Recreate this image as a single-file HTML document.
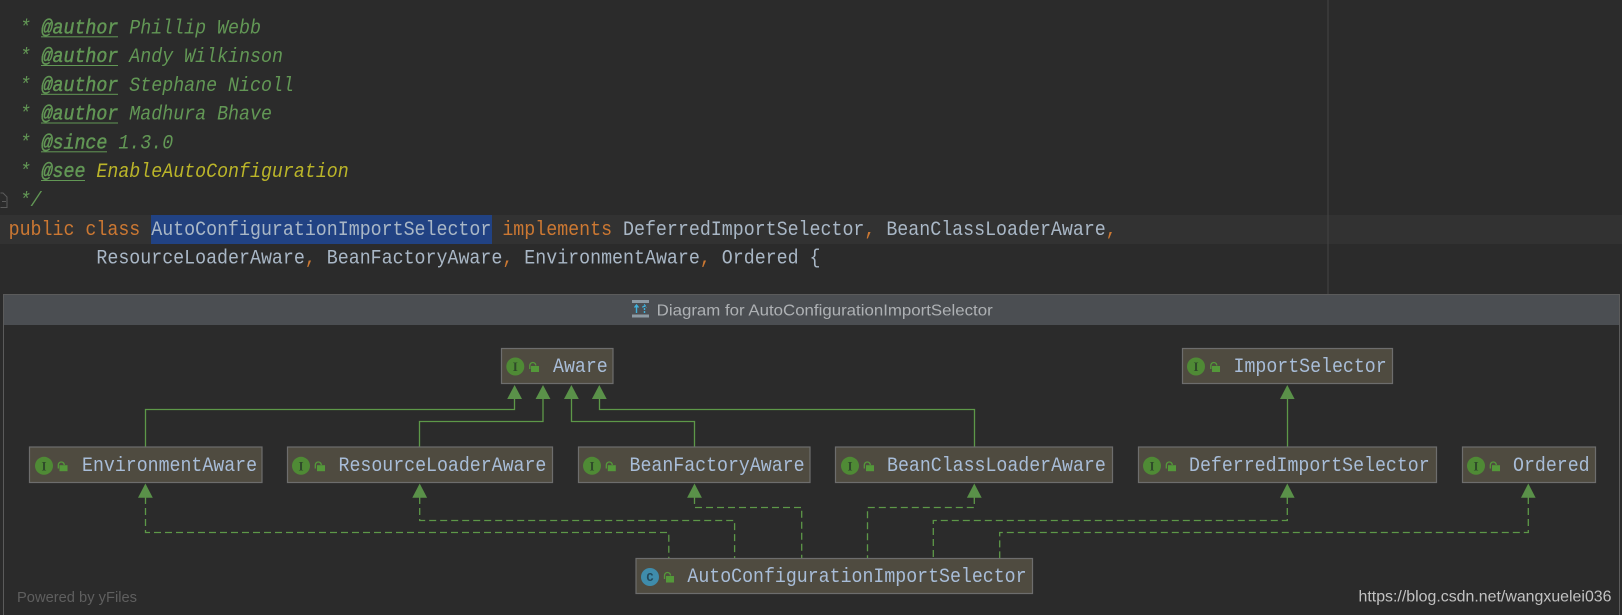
<!DOCTYPE html>
<html><head><meta charset="utf-8"><style>
html,body{margin:0;padding:0;background:#2b2b2b;width:1622px;height:615px;overflow:hidden}
svg{display:block}
.m{font-family:"Liberation Mono",monospace;font-size:20px}
.c{font-style:italic;fill:#629755}
.b{stroke:#629755;stroke-width:.45}
.t{fill:#a9b7c6}
.k{fill:#cc7832}
.n{font-family:"Liberation Mono",monospace;font-size:20px;fill:#a8bdd8}
.s{font-family:"Liberation Sans",sans-serif}
.box{fill:#4f4b40;stroke:#6d6d6d;stroke-width:1.2}
.e{fill:none;stroke:#5d9848;stroke-width:1.3}
.d{fill:none;stroke:#5d9848;stroke-width:1.3;stroke-dasharray:7 4}
.a{fill:#5a9149}
.ic{fill:#4f8a35}
.lk{fill:#54983a}
.sh{fill:none;stroke:#54983a;stroke-width:1.3}
.I{font-family:"Liberation Serif",serif;font-size:13px;font-weight:bold;fill:#2f4a2a;text-anchor:middle}
</style></head><body>
<svg width="1622" height="615" viewBox="0 0 1622 615" xmlns="http://www.w3.org/2000/svg">
<rect width="1622" height="615" fill="#2b2b2b"/>
<rect x="0" y="215" width="1622" height="29" fill="#323232"/>
<rect x="151" y="215" width="341" height="29" fill="#214283"/>
<rect x="1327.5" y="0" width="1" height="294" fill="#444"/>

<g class="m" xml:space="preserve">
<text class="c" transform="translate(8.6 33.5) scale(.9145 1)" xml:space="preserve"> * <tspan class="b">@author</tspan> Phillip Webb</text>
<text class="c" transform="translate(8.6 62.2) scale(.9145 1)" xml:space="preserve"> * <tspan class="b">@author</tspan> Andy Wilkinson</text>
<text class="c" transform="translate(8.6 91) scale(.9145 1)" xml:space="preserve"> * <tspan class="b">@author</tspan> Stephane Nicoll</text>
<text class="c" transform="translate(8.6 119.7) scale(.9145 1)" xml:space="preserve"> * <tspan class="b">@author</tspan> Madhura Bhave</text>
<text class="c" transform="translate(8.6 148.5) scale(.9145 1)" xml:space="preserve"> * <tspan class="b">@since</tspan> 1.3.0</text>
<text class="c" transform="translate(8.6 177.2) scale(.9145 1)" xml:space="preserve"> * <tspan class="b">@see</tspan> <tspan fill="#bbb529">EnableAutoConfiguration</tspan></text>
<text class="c" transform="translate(8.6 206) scale(.9145 1)" xml:space="preserve"> */</text>
<text transform="translate(8.6 235) scale(.9145 1)" xml:space="preserve" class="t"><tspan class="k">public class </tspan>AutoConfigurationImportSelector <tspan class="k">implements </tspan>DeferredImportSelector<tspan class="k">, </tspan>BeanClassLoaderAware<tspan class="k">,</tspan></text>
<text transform="translate(8.6 263.7) scale(.9145 1)" xml:space="preserve" class="t">        ResourceLoaderAware<tspan class="k">, </tspan>BeanFactoryAware<tspan class="k">, </tspan>EnvironmentAware<tspan class="k">, </tspan>Ordered {</text>
</g>
<g fill="#629755">
<rect x="41" y="36.3" width="77" height="1"/>
<rect x="41" y="65" width="77" height="1"/>
<rect x="41" y="93.8" width="77" height="1"/>
<rect x="41" y="122.5" width="77" height="1"/>
<rect x="41" y="151.3" width="66" height="1"/>
<rect x="41" y="180" width="44" height="1"/>
</g>
<path d="M0.5 193 H3 L7 197 V207.5 H0.5 M2 201.5 H6" fill="none" stroke="#5b5b5b" stroke-width="1"/>

<!-- panel -->
<rect x="3.5" y="294.5" width="1616" height="330" fill="#2b2b2b" stroke="#5b5b5b" stroke-width="1"/>
<rect x="4" y="295" width="1615" height="30" fill="#4b4e52"/>
<g>
<rect x="632" y="300" width="17" height="3" fill="#8d9aa3"/>
<rect x="632" y="314.5" width="17" height="3" fill="#8d9aa3"/>
<path d="M636.5 313 V306 M634.5 307.5 L636.5 305 L638.5 307.5" fill="none" stroke="#3fb1dc" stroke-width="1.4"/>
<path d="M644.5 313 V306 M642.5 307.5 L644.5 305 L646.5 307.5" fill="none" stroke="#3fb1dc" stroke-width="1.4" stroke-dasharray="2 1"/>
</g>
<text class="s" x="656.7" y="315.5" font-size="16" fill="#aeb1b4" textLength="336" lengthAdjust="spacingAndGlyphs">Diagram for AutoConfigurationImportSelector</text>

<!-- solid edges -->
<path class="e" d="M145.5 447 V409.5 H514.5 V398"/>
<path class="e" d="M419.5 447 V421.5 H543 V398"/>
<path class="e" d="M694.5 447 V421.5 H571.5 V398"/>
<path class="e" d="M974.5 447 V409.5 H599.5 V398"/>
<path class="e" d="M1287.5 447 V398"/>
<!-- dashed edges -->
<path class="d" d="M145.5 497 V532.5 H668.8 V558"/>
<path class="d" d="M419.7 497 V520.5 H734.6 V558"/>
<path class="d" d="M694.5 497 V507.5 H801.7 V558"/>
<path class="d" d="M974.3 497 V507.5 H867.5 V558"/>
<path class="d" d="M1287.3 497 V520.5 H933.3 V558"/>
<path class="d" d="M1528.3 497 V532.5 H999.7 V558"/>
<!-- arrows -->
<g class="a">
<polygon points="514.6,385 507.2,399 522,399"/>
<polygon points="543,385 535.6,399 550.4,399"/>
<polygon points="571.4,385 564,399 578.8,399"/>
<polygon points="599.3,385 591.9,399 606.7,399"/>
<polygon points="1287.3,385 1280,399 1294.6,399"/>
<polygon points="145.4,483.5 138,497.8 152.8,497.8"/>
<polygon points="419.7,483.5 412.3,497.8 427.1,497.8"/>
<polygon points="694.5,483.5 687.1,497.8 701.9,497.8"/>
<polygon points="974.3,483.5 966.9,497.8 981.7,497.8"/>
<polygon points="1287.3,483.5 1280,497.8 1294.6,497.8"/>
<polygon points="1528.3,483.5 1521,497.8 1535.6,497.8"/>
</g>

<!-- nodes -->
<g>
<rect class="box" x="501.5" y="348.5" width="111.5" height="35"/>
<circle class="ic" cx="515.3" cy="366.5" r="9"/><text class="I" x="515.3" y="371">I</text>
<path class="sh" d="M529.8 369 V365.5 a3 3 0 0 1 6 0"/><rect class="lk" x="531" y="366" width="8" height="6"/>
<text class="n" transform="translate(553 372) scale(.9125 1)">Aware</text>
</g>
<g>
<rect class="box" x="1182.5" y="348.5" width="210" height="35"/>
<circle class="ic" cx="1196" cy="366.5" r="9"/><text class="I" x="1196" y="371">I</text>
<path class="sh" d="M1210.8 369 V365.5 a3 3 0 0 1 6 0"/><rect class="lk" x="1212" y="366" width="8" height="6"/>
<text class="n" transform="translate(1233.5 372) scale(.9125 1)">ImportSelector</text>
</g>
<g>
<rect class="box" x="29.5" y="447" width="232.5" height="35.5"/>
<circle class="ic" cx="44" cy="465.8" r="9"/><text class="I" x="44" y="470.3">I</text>
<path class="sh" d="M58.3 468.5 V465 a3 3 0 0 1 6 0"/><rect class="lk" x="59.5" y="465.2" width="8" height="6"/>
<text class="n" transform="translate(82 471) scale(.9125 1)">EnvironmentAware</text>
</g>
<g>
<rect class="box" x="287.5" y="447" width="265" height="35.5"/>
<circle class="ic" cx="301" cy="465.8" r="9"/><text class="I" x="301" y="470.3">I</text>
<path class="sh" d="M315.3 468.5 V465 a3 3 0 0 1 6 0"/><rect class="lk" x="317" y="465.2" width="8" height="6"/>
<text class="n" transform="translate(338.5 471) scale(.9125 1)">ResourceLoaderAware</text>
</g>
<g>
<rect class="box" x="578.5" y="447" width="231.5" height="35.5"/>
<circle class="ic" cx="592" cy="465.8" r="9"/><text class="I" x="592" y="470.3">I</text>
<path class="sh" d="M606.3 468.5 V465 a3 3 0 0 1 6 0"/><rect class="lk" x="607.8" y="465.2" width="8" height="6"/>
<text class="n" transform="translate(629.5 471) scale(.9125 1)">BeanFactoryAware</text>
</g>
<g>
<rect class="box" x="835.5" y="447" width="277" height="35.5"/>
<circle class="ic" cx="850" cy="465.8" r="9"/><text class="I" x="850" y="470.3">I</text>
<path class="sh" d="M864.3 468.5 V465 a3 3 0 0 1 6 0"/><rect class="lk" x="866" y="465.2" width="8" height="6"/>
<text class="n" transform="translate(887 471) scale(.9125 1)">BeanClassLoaderAware</text>
</g>
<g>
<rect class="box" x="1138.5" y="447" width="298" height="35.5"/>
<circle class="ic" cx="1152" cy="465.8" r="9"/><text class="I" x="1152" y="470.3">I</text>
<path class="sh" d="M1166.3 468.5 V465 a3 3 0 0 1 6 0"/><rect class="lk" x="1168" y="465.2" width="8" height="6"/>
<text class="n" transform="translate(1189 471) scale(.9125 1)">DeferredImportSelector</text>
</g>
<g>
<rect class="box" x="1462.5" y="447" width="133" height="35.5"/>
<circle class="ic" cx="1476" cy="465.8" r="9"/><text class="I" x="1476" y="470.3">I</text>
<path class="sh" d="M1490.3 468.5 V465 a3 3 0 0 1 6 0"/><rect class="lk" x="1492" y="465.2" width="8" height="6"/>
<text class="n" transform="translate(1513 471) scale(.9125 1)">Ordered</text>
</g>
<g>
<rect class="box" x="636" y="558.5" width="396.5" height="35"/>
<circle cx="650" cy="577" r="9" fill="#3f8cab"/><text x="650" y="581" font-family="Liberation Mono,monospace" font-size="12" font-weight="bold" fill="#22485a" text-anchor="middle">C</text>
<path class="sh" d="M664.5 579 V575.5 a3 3 0 0 1 6 0"/><rect class="lk" x="666" y="576" width="8" height="6.5"/>
<text class="n" transform="translate(687.4 582) scale(.9125 1)">AutoConfigurationImportSelector</text>
</g>

<text class="s" x="17" y="602" font-size="14.5" fill="#5f5f5f" textLength="120" lengthAdjust="spacingAndGlyphs">Powered by yFiles</text>
<text class="s" x="1358.5" y="601.5" font-size="16" fill="#c2c2c2" textLength="253" lengthAdjust="spacingAndGlyphs">https://blog.csdn.net/wangxuelei036</text>
</svg>
</body></html>
